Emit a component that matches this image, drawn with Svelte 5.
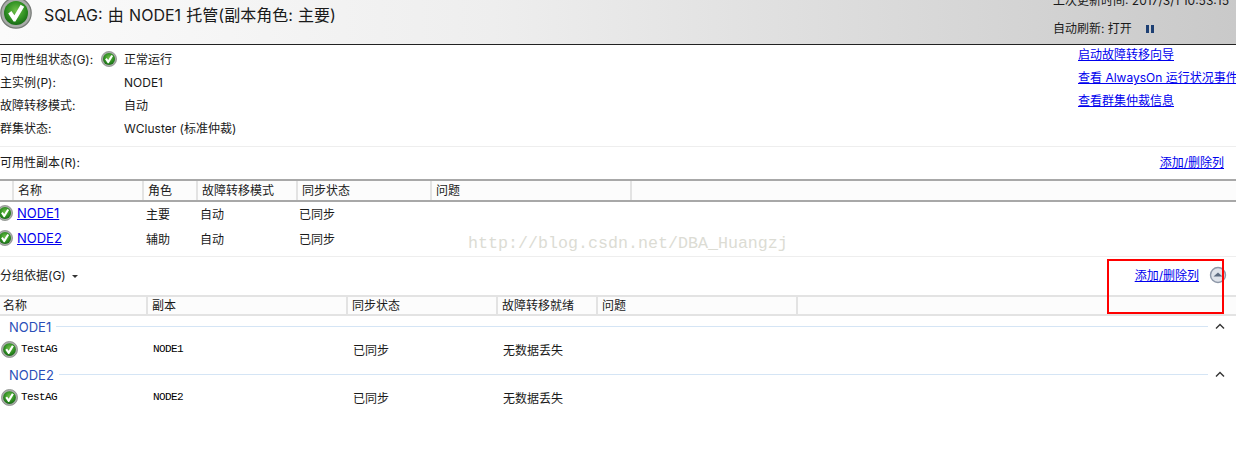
<script>
  const summary = [
    { label: '可用性组状态(G):', value: '正常运行', ok: true },
    { label: '主实例(P):', value: 'NODE1' },
    { label: '故障转移模式:', value: '自动' },
    { label: '群集状态:', value: 'WCluster (标准仲裁)' }
  ];
  const actions = ['启动故障转移向导', '查看 AlwaysOn 运行状况事件', '查看群集仲裁信息'];
  const replicas = [
    { name: 'NODE1', role: '主要' },
    { name: 'NODE2', role: '辅助' }
  ];
</script>

{#snippet check(size)}
  <svg class="check" width={size} height={size} viewBox="0 0 32 32">
    <defs>
      <radialGradient id="disc" cx="50%" cy="40%" r="60%">
        <stop offset="0" stop-color="#6fc04a" />
        <stop offset="0.65" stop-color="#2f8f22" />
        <stop offset="1" stop-color="#176a14" />
      </radialGradient>
    </defs>
    <circle cx="16" cy="16" r="15.2" fill="#a9aca9" stroke="#767a76" stroke-width="1.2" />
    <circle cx="16" cy="16" r="12" fill="url(#disc)" />
    <path d="M8.2 16.4l3.2-2.4 3 4.2 6.2-10.4 3.6 2-8.8 14.6h-1.8z" fill="#fff" />
  </svg>
{/snippet}

<div class="page">
  <header class="top">
    <div class="title">
      {@render check(32)}
      <span>SQLAG: 由 NODE1 托管(副本角色: 主要)</span>
    </div>
    <div class="refresh">
      <div class="updated">上次更新时间: 2017/3/1 10:53:15</div>
      <div class="auto">自动刷新: 打开 <i class="pause"></i></div>
    </div>
  </header>

  <section class="summary">
    <div class="facts">
      {#each summary as row}
        <div class="fact">
          <span class="key">{row.label}</span>
          <span class="val">
            {#if row.ok}<span class="dot">{@render check(16)}</span>{/if}{row.value}
          </span>
        </div>
      {/each}
    </div>
    <div class="actions">
      {#each actions as a}
        <a href="#top">{a}</a>
      {/each}
    </div>
  </section>

  <section class="replicas">
    <div class="bar">
      <span>可用性副本(R):</span>
      <a href="#top">添加/删除列</a>
    </div>
    <div class="head head-a">
      <span></span><span>名称</span><span>角色</span><span>故障转移模式</span><span>同步状态</span><span>问题</span><span></span>
    </div>
    {#each replicas as r}
      <div class="row-a">
        <span class="mark">{@render check(16)}</span>
        <a class="node" href="#top">{r.name}</a>
        <span>{r.role}</span>
        <span>自动</span>
        <span>已同步</span>
      </div>
    {/each}
  </section>

  <section class="groups">
    <div class="bar group-bar">
      <span>分组依据(G) <i class="caret"></i></span>
      <span class="bar-right">
        <a href="#top">添加/删除列</a>
        <svg class="collapse" width="18" height="18" viewBox="0 0 18 18">
          <circle cx="9" cy="9" r="7.5" fill="#dfe3ea" stroke="#8d97a8" stroke-width="1.4" />
          <path d="M4.5 10.5L9 6.5l4.5 4z" fill="#5d6b80" />
        </svg>
      </span>
    </div>
    <div class="head head-b">
      <span>名称</span><span>副本</span><span>同步状态</span><span>故障转移就绪</span><span>问题</span><span></span>
    </div>
    {#each replicas as r}
      <div class="group">
        <span class="group-name">{r.name}</span>
        <span class="group-line"></span>
        <svg class="chev" width="10" height="7" viewBox="0 0 10 7">
          <path d="M1 5.5L5 1.5l4 4" fill="none" stroke="#333" stroke-width="1.4" />
        </svg>
      </div>
      <div class="row-b">
        <span class="db">{@render check(17)}<span class="mono">TestAG</span></span>
        <span class="mono">{r.name}</span>
        <span>已同步</span>
        <span>无数据丢失</span>
      </div>
    {/each}
  </section>

  <div class="watermark">http://blog.csdn.net/DBA_Huangzj</div>
  <div class="redbox"></div>
</div>

<style>
  :global(body) {
    margin: 0;
    background: #fff;
  }

  .page {
    position: relative;
    width: 1236px;
    height: 466px;
    overflow: hidden;
    background: #fff;
    color: #1a1a1a;
    font-family: Inter, "Noto Sans CJK SC", sans-serif;
    font-size: 12px;
  }

  a {
    color: #0000ee;
    text-decoration: underline;
  }

  .top {
    display: flex;
    justify-content: space-between;
    height: 44px;
    overflow: hidden;
    border-bottom: 1px solid #222;
    background: linear-gradient(90deg, #fbfbfb 0%, #eeeeee 40%, #c9c9c9 100%);
  }

  .title {
    display: flex;
    align-items: flex-start;
    gap: 12px;
    font-size: 16px;
    line-height: 30px;
    word-spacing: 0.75px;
  }

  .title .check {
    margin-top: -3px;
    flex: none;
  }

  .refresh {
    width: 183px;
    margin-top: -9px;
  }

  .updated {
    height: 20px;
    line-height: 20px;
    white-space: nowrap;
  }

  .auto {
    margin-top: 8px;
    line-height: 20px;
    white-space: nowrap;
  }

  .pause {
    display: inline-block;
    width: 2px;
    height: 8px;
    margin-left: 11px;
    border-left: 3px solid #1d3f73;
    border-right: 3px solid #1d3f73;
  }

  .summary {
    display: flex;
    justify-content: space-between;
    height: 101px;
    border-bottom: 1px solid #eee;
  }

  .facts {
    padding-top: 3px;
  }

  .fact {
    display: flex;
    height: 23px;
    line-height: 23px;
  }

  .key {
    width: 124px;
  }

  .val {
    position: relative;
    display: flex;
    align-items: center;
  }

  .dot {
    position: absolute;
    left: -23px;
    top: 3px;
    line-height: 0;
  }

  .actions {
    display: flex;
    flex-direction: column;
    width: 158px;
    white-space: nowrap;
  }

  .actions a {
    height: 23px;
    line-height: 19px;
  }

  .bar {
    display: flex;
    justify-content: space-between;
    align-items: center;
    height: 28px;
    padding-bottom: 4px;
    padding-right: 12px;
  }

  .head {
    display: grid;
    background: #fcfcfc;
  }

  .head span {
    padding-left: 4px;
    border-right: 2px solid #e3e3e3;
  }

  .head span:last-child {
    border-right: 0;
  }

  .head-a {
    grid-template-columns: 14px 130px 54px 100px 134px 200px 1fr;
    height: 19px;
    line-height: 19px;
    border-top: 2px solid #a8a8a8;
    border-bottom: 2px solid #a8a8a8;
  }

  .head-a span:first-child {
    padding-left: 0;
  }

  .head-b {
    grid-template-columns: 148px 200px 150px 100px 200px 1fr;
    height: 17px;
    line-height: 17px;
    border-top: 2px solid #e3e3e3;
    border-bottom: 2px solid #e3e3e3;
  }

  .head-b span:first-child {
    padding-left: 3px;
  }

  .row-a {
    display: grid;
    grid-template-columns: 17px 129px 54px 99px 1fr;
    align-items: center;
    height: 22px;
    padding-bottom: 3px;
  }

  .node {
    font-size: 13px;
  }

  .mark {
    margin-left: -3px;
    line-height: 0;
  }

  .replicas {
    height: 109px;
    border-bottom: 1px solid #eee;
  }

  .group-bar {
    height: 35px;
    padding-bottom: 3px;
    padding-right: 10px;
  }

  .group-bar .caret {
    display: inline-block;
    margin: 0 0 2px 3px;
    border: 3px solid transparent;
    border-top: 3px solid #333;
    border-bottom: 0;
  }

  .bar-right {
    display: flex;
    align-items: center;
    gap: 10px;
    margin-right: -1px;
  }

  .group {
    display: flex;
    align-items: center;
    gap: 5px;
    height: 21px;
    padding-left: 9px;
    padding-right: 11px;
    color: #2b4fb8;
    font-size: 13px;
  }

  .group-line {
    flex: 1;
    height: 1px;
    margin-right: 2px;
    background: #d5e5f5;
  }

  .chev {
    flex: none;
  }

  .row-b {
    display: grid;
    grid-template-columns: 153px 200px 150px 1fr;
    align-items: center;
    height: 24px;
    padding-bottom: 3px;
  }

  .db {
    display: flex;
    align-items: center;
    gap: 3px;
    padding-left: 1px;
  }

  .mono {
    font-family: "Liberation Mono", monospace;
    font-size: 11px;
    letter-spacing: -0.6px;
    color: #000;
  }

  .watermark {
    position: absolute;
    left: 468px;
    top: 234px;
    font-family: "Liberation Mono", monospace;
    font-size: 16.67px;
    color: #dcdcd4;
    white-space: nowrap;
  }

  .redbox {
    position: absolute;
    left: 1107px;
    top: 259px;
    width: 113px;
    height: 51px;
    border: 2px solid #f00;
  }
</style>
